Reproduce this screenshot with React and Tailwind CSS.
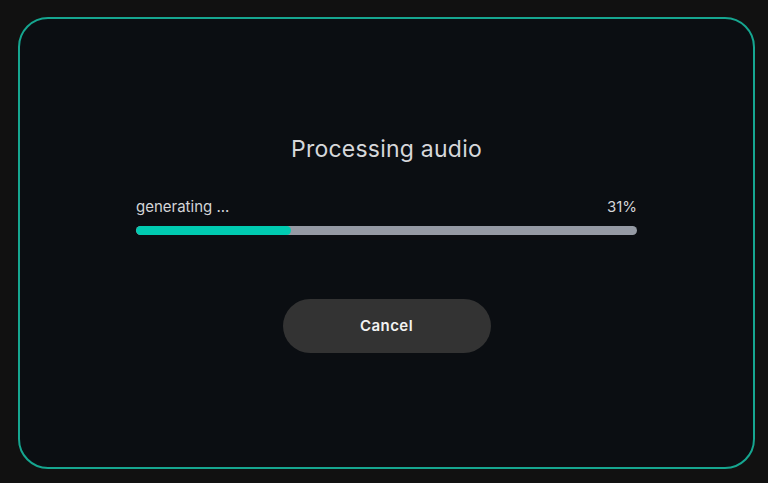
export default function App() {
  const progress = 31;

  return (
    <div className="w-[768px] h-[483px] bg-[#111111] pl-[18px] pr-[13px] pt-[17px] pb-[14px] font-['Inter','Noto_Sans',sans-serif]">
      <div className="h-full w-full rounded-[30px] border-2 border-[#16a690] bg-[#0b0e12] flex flex-col items-center pt-[115px]">
        <h2 className="text-[23px] leading-[30px] tracking-[0.01em] text-[#d6d7da] font-normal">Processing audio</h2>

        <div className="w-[501px] mt-[33px] flex flex-col">
          <div className="flex justify-between items-center text-[15px] leading-[20px] text-[#d4d5d8]">
            <span>generating ...</span>
            <span>{progress}%</span>
          </div>
          <div className="mt-[9px] h-[9px] w-full rounded-full bg-[#959aa4] overflow-hidden">
            <div className="h-full rounded-full bg-[#00cbb1]" style={{ width: `${progress}%` }} />
          </div>
        </div>

        <button className="mt-[64px] w-[208px] h-[54px] rounded-full bg-[#333333] text-[15px] tracking-[0.03em] font-semibold text-[#f2f2f2]">
          Cancel
        </button>
      </div>
    </div>
  );
}
